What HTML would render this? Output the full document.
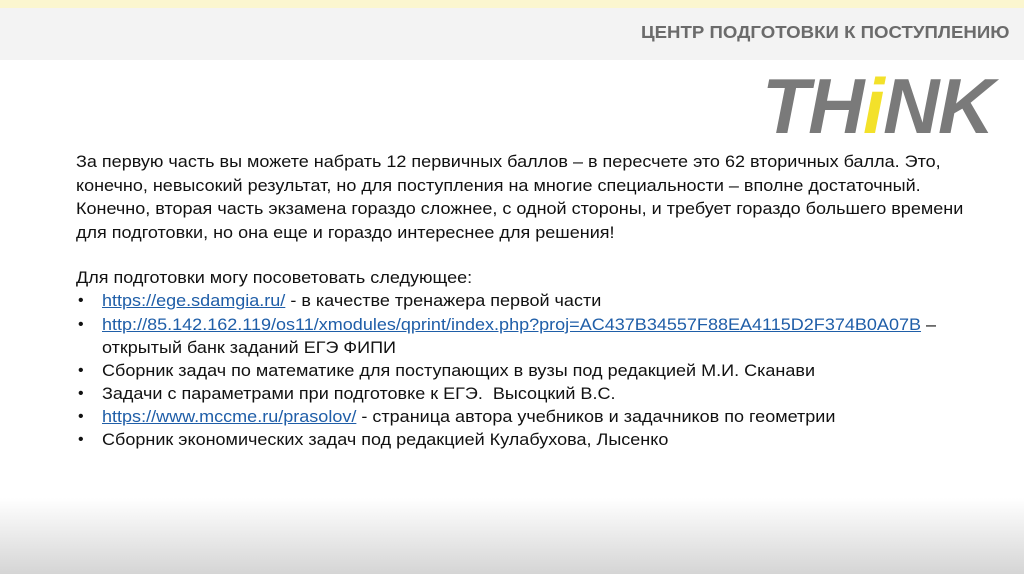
<!DOCTYPE html>
<html><head><meta charset="utf-8"><style>
body{margin:0;width:1024px;height:574px;position:relative;background:#fff;overflow:hidden;font-family:"Liberation Sans",sans-serif}
.y{position:absolute;left:0;top:0;width:1024px;height:8px;background:#fbf6cf}
.band{position:absolute;left:0;top:8px;width:1024px;height:52px;background:#f3f3f3}
.hd{position:absolute;left:641px;top:22px;font-weight:bold;font-size:17.5px;color:#6b6b6b;white-space:nowrap;transform:scaleX(1.065);transform-origin:left}
.logo{position:absolute;left:762px;top:61px;font-weight:bold;font-style:italic;font-size:78px;color:#7a7a7a;letter-spacing:-1.5px;white-space:nowrap}
.logo span{color:#f3e12a}
.bot{position:absolute;left:0;top:498px;width:1024px;height:76px;background:linear-gradient(#fff,#d5d5d5)}
.l{position:absolute;left:76px;font-size:17px;line-height:20px;color:#111;white-space:nowrap;transform:scaleX(1.06);transform-origin:left}
.b{position:absolute;left:78px;font-size:16px;line-height:20px;color:#111}
a{color:#1f5ea8;text-decoration:underline}
</style></head><body>
<div class="y"></div><div class="band"></div>
<div class="hd">ЦЕНТР ПОДГОТОВКИ К ПОСТУПЛЕНИЮ</div>
<div class="logo">TH<span>i</span>NK</div>
<div class="l" style="top:152px">За первую часть вы можете набрать 12 первичных баллов – в пересчете это 62 вторичных балла. Это,</div>
<div class="l" style="top:176px">конечно, невысокий результат, но для поступления на многие специальности – вполне достаточный.</div>
<div class="l" style="top:199px">Конечно, вторая часть экзамена гораздо сложнее, с одной стороны, и требует гораздо большего времени</div>
<div class="l" style="top:223px">для подготовки, но она еще и гораздо интереснее для решения!</div>
<div class="l" style="top:268px">Для подготовки могу посоветовать следующее:</div>
<div class="b" style="top:291px">•</div><div class="l" style="left:102px;top:291px"><a>https://ege.sdamgia.ru/</a> - в качестве тренажера первой части</div>
<div class="b" style="top:315px">•</div><div class="l" style="left:102px;top:315px"><a>http://85.142.162.119/os11/xmodules/qprint/index.php?proj=AC437B34557F88EA4115D2F374B0A07B</a> –</div>
<div class="l" style="left:102px;top:338px">открытый банк заданий ЕГЭ ФИПИ</div>
<div class="b" style="top:361px">•</div><div class="l" style="left:102px;top:361px">Сборник задач по математике для поступающих в вузы под редакцией М.И. Сканави</div>
<div class="b" style="top:384px">•</div><div class="l" style="left:102px;top:384px">Задачи с параметрами при подготовке к ЕГЭ.&nbsp; Высоцкий В.С.</div>
<div class="b" style="top:407px">•</div><div class="l" style="left:102px;top:407px"><a>https://www.mccme.ru/prasolov/</a> - страница автора учебников и задачников по геометрии</div>
<div class="b" style="top:430px">•</div><div class="l" style="left:102px;top:430px">Сборник экономических задач под редакцией Кулабухова, Лысенко</div>
<div class="bot"></div>
</body></html>
